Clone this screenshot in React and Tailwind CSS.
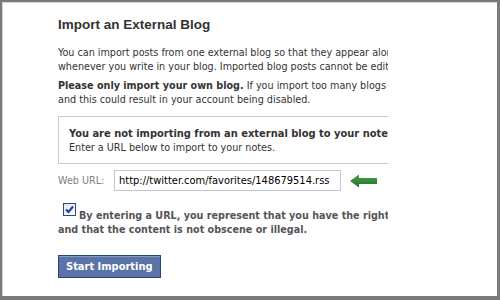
import React from "react";

const Line = ({ children, className = "" }) => (
  <div className={"whitespace-nowrap overflow-hidden " + className}>{children}</div>
);

export default function App() {
  return (
    <div className="w-[500px] h-[300px] bg-[#7a7a7a] pt-[2px] pl-[2px] pr-[3px] pb-[4px]">
      <div className="w-full h-full bg-white border-l border-t border-[#d8d8d8] overflow-hidden">
        <div
          className="ml-[55px] w-[330px] pt-[13px] text-[#333333] text-[10.7px] leading-[14px]"
          style={{ fontFamily: '"DejaVu Sans Condensed", "DejaVu Sans", sans-serif' }}
        >
          <div
            className="text-[13.5px] leading-[18px] font-bold"
            style={{ fontFamily: '"Liberation Sans", Arial, sans-serif' }}
          >
            Import an External Blog
          </div>
          <div className="mt-[12px]">
            <Line>You can import posts from one external blog so that they appear alongside your notes</Line>
            <Line>whenever you write in your blog. Imported blog posts cannot be edited.</Line>
          </div>
          <div className="mt-[5px]">
            <Line>
              <b>Please only import your own blog.</b> If you import too many blogs you may be flagged
            </Line>
            <Line>and this could result in your account being disabled.</Line>
          </div>
          <div className="mt-[9px] border border-r-0 border-[#cccccc] pl-[10px] pt-[10px] pb-[8px]">
            <Line className="font-bold text-[11px] leading-[14px]">You are not importing from an external blog to your notes.</Line>
            <Line>Enter a URL below to import to your notes.</Line>
          </div>
          <div className="mt-[6px] flex items-center">
            <span className="text-[#808080] w-[56px]">Web URL:</span>
            <div className="w-[227px] h-[21px] border border-[#bdc7d8] flex items-center pl-[4px] text-[#000] text-[11px] whitespace-nowrap overflow-hidden">
              http://twitter.com/favorites/148679514.rss
            </div>
            <svg width="30" height="16" viewBox="0 0 30 16" className="ml-[8px]">
              <defs>
                <linearGradient id="g" x1="0" y1="0" x2="0" y2="1">
                  <stop offset="0" stopColor="#4fa24f" />
                  <stop offset="1" stopColor="#1f6e24" />
                </linearGradient>
              </defs>
              <path d="M1 8 L10 1.5 L10 5 L28 5 L28 11 L10 11 L10 14.5 Z" fill="url(#g)" />
            </svg>
          </div>
          <div className="mt-[12px] flex items-start text-[#555555] font-bold">
            <div className="ml-[5px] mr-[3px] w-[13px] h-[13px] shrink-0 border border-[#1c5180] bg-gradient-to-br from-[#dce4ec] to-[#ffffff] flex items-center justify-center">
              <svg width="9" height="9" viewBox="0 0 9 9">
                <path d="M1 4.5 L3.5 7 L8 1.5" fill="none" stroke="#21389c" strokeWidth="2" />
              </svg>
            </div>
            <Line className="pt-[6px]">By entering a URL, you represent that you have the rights to import this content</Line>
          </div>
          <Line className="text-[#555555] font-bold">and that the content is not obscene or illegal.</Line>
          <button className="mt-[18px] h-[23px] px-[7px] bg-[#5b74a8] border border-[#29447e] text-white font-bold text-[11px] shadow-[inset_0_1px_0_#8a9cc2]">
            Start Importing
          </button>
        </div>
      </div>
    </div>
  );
}
